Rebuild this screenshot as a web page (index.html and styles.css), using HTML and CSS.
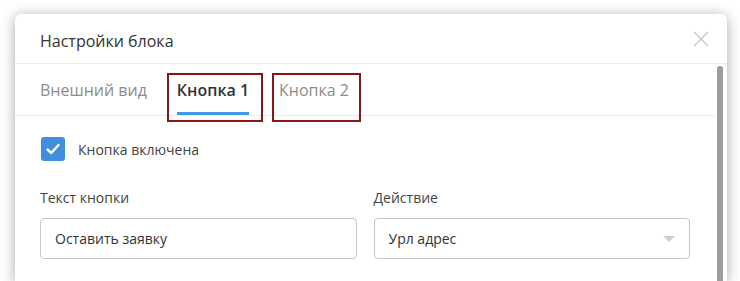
FILE: index.html
```html
<!DOCTYPE html>
<html lang="ru">
<head>
  <meta charset="UTF-8">
  <title>Настройки блока</title>
  <link rel="stylesheet" href="styles.css">
</head>
<body>

  <div class="modal">
    <div class="modal-head">
      <div class="modal-title">Настройки блока</div>
      <svg class="close" width="16" height="16" viewBox="0 0 16 16">
        <path d="M1 1 L15 15 M15 1 L1 15" stroke="#c4c4c4" stroke-width="1.2" fill="none"/>
      </svg>
    </div>

    <div class="modal-body">
      <div class="scroll-content">
        <div class="tabs">
          <div class="tab">Внешний вид</div>
          <div class="tab active">Кнопка 1</div>
          <div class="tab">Кнопка 2</div>
          <!-- annotation frames -->
          <div class="mark mark-1"></div>
          <div class="mark mark-2"></div>
        </div>

        <div class="form">
          <label class="check-row">
            <span class="checkbox">
              <svg width="16" height="16" viewBox="0 0 16 16">
                <path d="M2.5 8.5 L6.3 12 L13.5 4" stroke="#fff" stroke-width="2.4" fill="none" stroke-linecap="round" stroke-linejoin="round"/>
              </svg>
            </span>
            Кнопка включена
          </label>

          <div class="fields">
            <div class="field">
              <div class="field-label">Текст кнопки</div>
              <div class="input">Оставить заявку</div>
            </div>
            <div class="field">
              <div class="field-label">Действие</div>
              <div class="input select">
                Урл адрес
                <span class="arrow"></span>
              </div>
            </div>
          </div>
        </div>
      </div>

      <div class="scrollbar">
        <div class="thumb"></div>
      </div>
    </div>
  </div>

</body>
</html>
```

FILE: styles.css
```css
body, html {
  margin: 0;
  height: 100%;
  overflow: hidden;
  background: #fff;
  font-family: "Open Sans", sans-serif;
  color: #333;
}

.modal {
  margin: 14px 0 0 15px;
  width: 712px;
  height: 267px;
  background: #fff;
  border-radius: 6px 6px 0 0;
  box-shadow: 0 2px 14px rgba(0, 0, 0, 0.35);
  display: flex;
  flex-direction: column;
}

.modal-head {
  height: 49px;
  flex-shrink: 0;
  border-bottom: 1px solid #ececec;
  padding: 0 18px 0 25px;
  display: flex;
  align-items: center;
  justify-content: space-between;
}

.modal-title {
  font-size: 16px;
  padding-top: 5px;
  color: #333;
}

.close {
  margin-top: 1px;
}

.modal-body {
  flex: 1;
  display: flex;
  min-height: 0;
}

.scroll-content {
  flex: 1;
}

.scrollbar {
  width: 12px;
  padding-top: 2px;
  display: flex;
}

.thumb {
  flex: 1;
  width: 6px;
  max-width: 6px;
  margin-left: 2px;
  background: #9d9d9d;
  border-radius: 3px 3px 0 0;
}

.tabs {
  position: relative;
  height: 51px;
  border-bottom: 1px solid #ececec;
  padding: 0 25px;
  display: flex;
  gap: 30px;
}

.tab {
  font-size: 16px;
  color: #8c8c8c;
  display: flex;
  align-items: center;
  box-sizing: border-box;
  border-bottom: 3px solid transparent;
  padding-top: 3px;
}

.tab.active {
  color: #333;
  font-weight: 600;
  border-bottom-color: #4299e1;
}

.mark {
  position: absolute;
  top: 9px;
  height: 45px;
  border: 2px solid #8b1414;
}

.mark-1 {
  left: 152px;
  width: 92px;
}

.mark-2 {
  left: 257px;
  width: 85px;
}

.form {
  padding: 21px 25px 0;
}

.check-row {
  display: flex;
  align-items: center;
  gap: 13px;
  font-size: 14px;
  color: #444;
  margin-bottom: 27px;
}

.checkbox {
  width: 24px;
  height: 24px;
  margin-left: 1px;
  border-radius: 3px;
  background: #3f8fde;
  display: flex;
  align-items: center;
  justify-content: center;
}

.fields {
  display: flex;
  gap: 17px;
}

.field {
  flex: 1;
}

.field-label {
  font-size: 14px;
  color: #444;
  line-height: 20px;
  margin-bottom: 10px;
}

.input {
  height: 41px;
  box-sizing: border-box;
  border: 1px solid #c6c6c6;
  border-radius: 4px;
  padding: 0 14px;
  display: flex;
  align-items: center;
  font-size: 14px;
  color: #333;
}

.select {
  justify-content: space-between;
}

.arrow {
  width: 0;
  height: 0;
  border-left: 6px solid transparent;
  border-right: 6px solid transparent;
  border-top: 6px solid #cfcfcf;
}
```
